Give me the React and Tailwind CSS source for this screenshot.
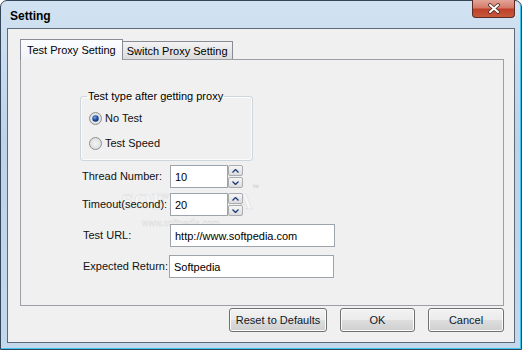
import React, { useState } from "react";

const btn = "h-[24px] rounded-[3px] border border-[#707070] bg-[linear-gradient(#f2f2f2_0%,#ebebeb_48%,#dddddd_52%,#cfcfcf_100%)] text-[11px] text-[#101828] shadow-[inset_0_0_0_1px_#fbfbfb]";
const field = "h-[23px] border border-[#9ea4ab] bg-white px-[4px] text-[11px] text-black outline-none";

function Radio({ checked }) {
    return (
        <svg width="13" height="13" viewBox="0 0 13 13">
            <defs>
                <radialGradient id="rbg" cx="50%" cy="50%" r="60%">
                    <stop offset="0%" stopColor="#f4f4f4" />
                    <stop offset="100%" stopColor="#d8d8d8" />
                </radialGradient>
                <radialGradient id="rdot" cx="40%" cy="35%" r="70%">
                    <stop offset="0%" stopColor="#7ea4e6" />
                    <stop offset="55%" stopColor="#1b4fa8" />
                    <stop offset="100%" stopColor="#0b2a66" />
                </radialGradient>
            </defs>
            <circle cx="6.5" cy="6.5" r="6" fill="url(#rbg)" stroke="#8e8f8f" />
            {checked && <circle cx="6.5" cy="6.5" r="3.2" fill="url(#rdot)" />}
        </svg>
    );
}

function Spin({ up }) {
    return (
        <div className="h-[11px] w-[15px] flex items-center justify-center rounded-[2px] border border-[#a9acb0] bg-[linear-gradient(#f6f6f6,#dcdcdc)]">
            <svg width="7" height="4" viewBox="0 0 7 4">
                <polyline points={up ? "0.5,3.5 3.5,0.5 6.5,3.5" : "0.5,0.5 3.5,3.5 6.5,0.5"} fill="none" stroke="#1d3b7a" strokeWidth="1.3" />
            </svg>
        </div>
    );
}

function SpinField({ value }) {
    const [v, setV] = useState(value);
    return (
        <div className="flex items-center">
            <input className={`${field} w-[58px]`} value={v} onChange={e => setV(e.target.value)} />
            <div className="flex flex-col gap-[1px]">
                <Spin up />
                <Spin />
            </div>
        </div>
    );
}

export default function App() {
    const [tab, setTab] = useState(0);
    const [url, setUrl] = useState("http://www.softpedia.com");
    const [ret, setRet] = useState("Softpedia");

    return (
        <div className="relative w-[522px] h-[350px] flex flex-col rounded-t-[7px] border border-[#34465a] bg-[linear-gradient(180deg,#d2e2f2_0%,#bcd3ea_40%,#c4d8ec_100%)] shadow-[inset_-1px_-1px_0_#3fc3ef] font-['Liberation_Sans',Arial,sans-serif] text-[11px] text-[#111]">
            {/* title bar */}
            <div className="h-[27px] flex items-center pl-[9px] pt-[3px]">
                <span className="text-[12px] font-bold text-black">Setting</span>
            </div>
            <button className="absolute top-[-1px] right-[6px] w-[43px] h-[18px] flex items-center justify-center rounded-b-[4px] border border-t-0 border-[#5b2b24] bg-[linear-gradient(180deg,#e3a498_0%,#d47a68_45%,#c0402a_55%,#c65a3c_100%)]">
                <svg width="14" height="11" viewBox="0 0 14 11">
                    <path d="M3 2 L11 9 M11 2 L3 9" stroke="#4a2a26" strokeWidth="3.6" strokeLinecap="round" />
                    <path d="M3 2 L11 9 M11 2 L3 9" stroke="#ffffff" strokeWidth="2" strokeLinecap="round" />
                </svg>
            </button>

            {/* client area */}
            <div className="mx-[6px] h-[315px] border border-[#5d6a79] bg-[#f0f0f0] flex flex-col pt-[10px]">
                {/* tabs */}
                <div className="ml-[12px] flex items-end">
                    <button onClick={() => setTab(0)} className={`relative z-10 -mb-px px-[6px] border border-b-0 border-[#898c95] ${tab === 0 ? "h-[21px] bg-[linear-gradient(#fbfdff,#f0f3f6)]" : "h-[19px] bg-[linear-gradient(#f3f3f3,#dadada)]"} text-[11px] text-black`}>
                        Test Proxy Setting
                    </button>
                    <button onClick={() => setTab(1)} className={`relative -mb-px px-[4px] border border-l-0 border-b-0 border-[#898c95] ${tab === 1 ? "h-[21px] z-10 bg-[linear-gradient(#fbfdff,#f0f3f6)]" : "h-[19px] bg-[linear-gradient(#f3f3f3,#dadada)]"} text-[11px] text-black`}>
                        Switch Proxy Setting
                    </button>
                </div>

                {/* panel */}
                <div className="relative ml-[12px] w-[484px] h-[247px] border border-[#9c9fa6] bg-[#f0f0f0] flex flex-col">
                    {/* watermark, painted under the rows */}
                    <div className="pointer-events-none absolute z-0 left-[100px] top-[130px] flex flex-col items-start">
                        <span className="font-['Liberation_Serif',serif] text-[23px] font-bold leading-[24px] text-[#f6f6f6] [-webkit-text-stroke:0.5px_#dadada]">SOFTPEDIA<sup className="text-[6px] align-top">™</sup></span>
                        <span className="ml-[21px] mt-[4px] text-[9px] leading-[10px] text-[#f8f8f8] [-webkit-text-stroke:0.3px_#d4d4d4]">www.softpedia.com</span>
                    </div>

                    <fieldset className="relative z-[1] ml-[59px] mt-[30px] w-[173px] h-[71px] rounded-[3px] border border-[#cdd6dc] pl-[6px] shadow-[inset_0_0_0_1px_#fbfbfb]">
                        <legend className="px-[1px] leading-[13px] text-black">Test type after getting proxy</legend>
                        <label className="mt-[9px] ml-[2px] flex items-center gap-[3px] h-[13px]">
                            <Radio checked />
                            <span>No Test</span>
                        </label>
                        <label className="mt-[12px] ml-[2px] flex items-center gap-[3px] h-[13px]">
                            <Radio />
                            <span>Test Speed</span>
                        </label>
                    </fieldset>

                    <div className="relative z-[1] ml-[61px] mt-[4px] flex items-center">
                        <span className="w-[88px]">Thread Number:</span>
                        <SpinField value="10" />
                    </div>
                    <div className="relative z-[1] ml-[61px] mt-[5px] flex items-center">
                        <span className="w-[88px]">Timeout(second):</span>
                        <SpinField value="20" />
                    </div>
                    <div className="relative z-[1] ml-[62px] mt-[8px] flex items-start">
                        <span className="w-[87px] pt-[3px]">Test URL:</span>
                        <input className={`${field} w-[165px]`} value={url} onChange={e => setUrl(e.target.value)} />
                    </div>
                    <div className="relative z-[1] ml-[62px] mt-[8px] flex items-start">
                        <span className="w-[86px] pt-[3px]">Expected Return:</span>
                        <input className={`${field} w-[165px]`} value={ret} onChange={e => setRet(e.target.value)} />
                    </div>
                </div>

                {/* buttons */}
                <div className="ml-[12px] w-[484px] mt-[2px] flex justify-end gap-[13px]">
                    <button className={`${btn} w-[98px]`}>Reset to Defaults</button>
                    <button className={`${btn} w-[75px]`}>OK</button>
                    <button className={`${btn} w-[76px]`}>Cancel</button>
                </div>
            </div>
        </div>
    );
}
